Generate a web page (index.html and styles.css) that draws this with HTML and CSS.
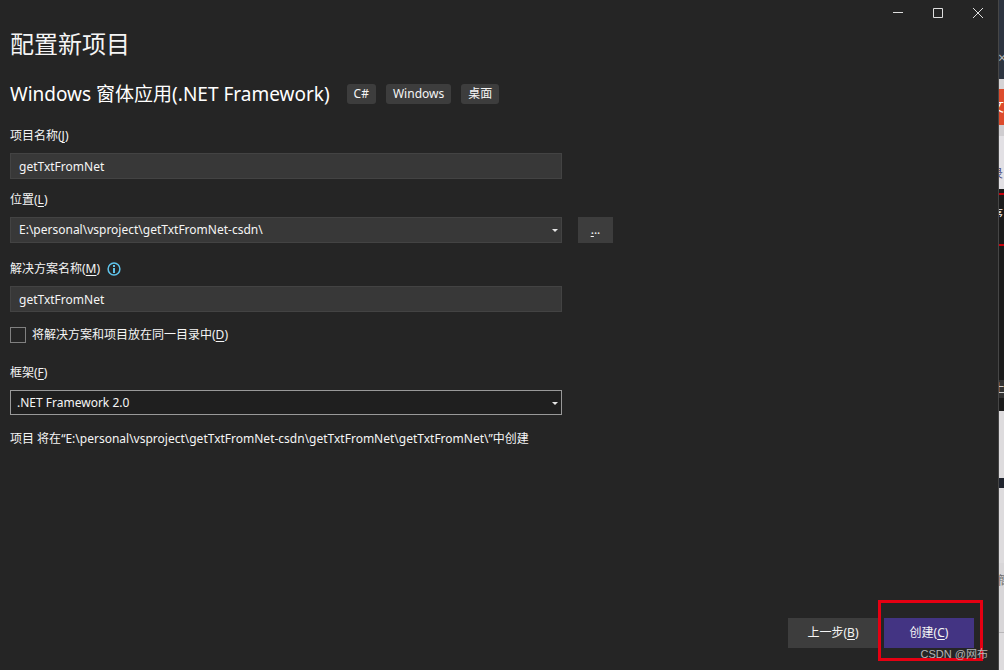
FILE: index.html
```html
<!DOCTYPE html>
<html lang="zh-CN">
<head>
<meta charset="utf-8">
<title>配置新项目</title>
<meta name="viewport" content="width=device-width, initial-scale=1">
<link rel="stylesheet" href="styles.css">
</head>
<body>
<div class="screen">
  <main class="dialog">
    <header class="titlebar">
      <button class="winbtn" type="button" aria-label="最小化"><svg width="10" height="10" viewBox="0 0 10 10"><path d="M0 4.5h10"/></svg></button>
      <button class="winbtn" type="button" aria-label="最大化"><svg width="10" height="10" viewBox="0 0 10 10"><path d="M.5.5h9v9h-9z"/></svg></button>
      <button class="winbtn" type="button" aria-label="关闭"><svg width="10" height="10" viewBox="0 0 10 10"><path d="M0 0l10 10M10 0L0 10"/></svg></button>
    </header>
    <form class="form">
      <h1 class="title">配置新项目</h1>
      <div class="template">
        <h2 class="template-name">Windows 窗体应用(.NET Framework)</h2>
        <ul class="tags">
          <li class="tag">C#</li>
          <li class="tag">Windows</li>
          <li class="tag">桌面</li>
        </ul>
      </div>

      <div class="field field-name">
        <label class="label" for="name">项目名称(<u>J</u>)</label>
        <input class="box" id="name" type="text" value="getTxtFromNet">
      </div>

      <div class="field field-location">
        <label class="label" for="location">位置(<u>L</u>)</label>
        <div class="row">
          <div class="combo">
            <select class="box" id="location"><option>E:\personal\vsproject\getTxtFromNet-csdn\</option></select>
            <svg class="arrow" width="6" height="3" viewBox="0 0 6 3"><path d="M0 0h6L3 3z"/></svg>
          </div>
          <button class="browse" type="button" aria-label="浏览"><u>.</u>..</button>
        </div>
      </div>

      <div class="field field-solution">
        <div class="label-row">
          <label class="label" for="solution">解决方案名称(<u>M</u>)</label>
          <svg class="info" width="14" height="14" viewBox="0 0 14 14"><circle cx="7" cy="7" r="5.9"/><path d="M7 3v2M7 6v5"/></svg>
        </div>
        <input class="box" id="solution" type="text" value="getTxtFromNet">
      </div>

      <div class="check">
        <input class="tick" id="same" type="checkbox">
        <label class="label" for="same">将解决方案和项目放在同一目录中(<u>D</u>)</label>
      </div>

      <div class="field field-framework">
        <label class="label" for="framework">框架(<u>F</u>)</label>
        <div class="combo">
          <select class="box box-active" id="framework"><option>.NET Framework 2.0</option></select>
          <svg class="arrow" width="6" height="3" viewBox="0 0 6 3"><path d="M0 0h6L3 3z"/></svg>
        </div>
      </div>
      <p class="summary">项目 将在<span class="quote">“</span>E:\personal\vsproject\getTxtFromNet-csdn\getTxtFromNet\getTxtFromNet\<span class="quote">”</span>中创建</p>
    </form>
    <footer class="footer">
      <button class="action" type="button">上一步(<u>B</u>)</button>
      <button class="action action-primary" type="button">创建(<u>C</u>)</button>
      <span class="marker"></span>
      <span class="watermark">CSDN @网布</span>
    </footer>
  </main>
  <aside class="behind" aria-hidden="true">
    <div class="part part-nav">×</div>
    <div class="part part-pale"></div>
    <div class="part part-orange">文</div>
    <div class="part part-gray"></div>
    <div class="part part-page">录</div>
    <div class="part part-code">序</div>
    <div class="part part-dark"></div>
    <div class="part part-status">上</div>
    <div class="part part-black"></div>
    <div class="part part-light"></div>
    <div class="part part-navy"></div>
    <div class="part part-lower"></div>
    <div class="part part-text">簡</div>
    <div class="part part-rest"></div>
  </aside>
</div>
</body>
</html>
```
FILE: styles.css
```css
* { box-sizing: border-box; }
body {
  margin: 0;
  background: #252526;
  color: #f5f5f5;
  font: 12px/18px "Noto Sans", "Noto Sans CJK SC", sans-serif;
}
button, input, select { font: inherit; color: inherit; border-radius: 0; }
u { text-underline-offset: 2px; }

.screen { display: flex; min-height: 100vh; }
.dialog {
  flex: 1;
  min-width: 0;
  display: flex;
  flex-direction: column;
  background: #252525;
  border-right: 1px solid #464646;
}

.titlebar { display: flex; justify-content: flex-end; height: 26px; }
.winbtn {
  display: flex;
  align-items: center;
  justify-content: center;
  width: 40px;
  padding: 0;
  border: 0;
  background: none;
}
.winbtn svg { fill: none; stroke: #dedede; stroke-width: 1; }

.form { flex: 1; padding: 0 10px; }
.title { margin: 0; font-size: 24px; line-height: 36px; font-weight: 400; }
.template { display: flex; align-items: center; gap: 17px; margin-top: 18px; }
.template-name { margin: 0; font-size: 19px; line-height: 28px; font-weight: 400; color: #fff; }
.tags { display: flex; gap: 10px; margin: 0; padding: 0; list-style: none; }
.tag { padding: 1px 7px; background: #3d3d3d; border-radius: 3px; }

.field { display: flex; flex-direction: column; align-items: flex-start; gap: 8px; }
.field-name { margin-top: 19px; }
.field-location { margin-top: 12px; }
.field-solution { margin-top: 17px; }
.field-framework { margin-top: 20px; }
.row { display: flex; gap: 16px; width: 100%; }
.label-row { display: flex; align-items: center; gap: 7px; }
.info { fill: none; stroke: #5fc3ea; stroke-width: 2; }
.info circle { stroke-width: 1.5; }

.box {
  width: 100%;
  max-width: 552px;
  height: 26px;
  padding: 0 8px;
  background: #383838;
  border: 1px solid #434343;
  outline: 0;
  appearance: none;
}
.box-active { height: 25px; padding: 0 6px; background: #1f1f1f; border-color: #999; }
.combo { position: relative; display: flex; width: 100%; max-width: 552px; }
.arrow { position: absolute; right: 4px; top: 12px; fill: #e6e6e6; pointer-events: none; }
.browse { width: 35px; height: 26px; padding: 0; border: 0; background: #3d3d3d; }

.check { display: flex; align-items: center; gap: 6px; margin-top: 14px; }
.tick { appearance: none; width: 16px; height: 16px; margin: 0; border: 1px solid #808080; background: #252525; }
.tick:checked { background: #999; }
.summary { margin: 15px 0 0; }
.quote { font-family: "Noto Sans", sans-serif; }

.footer {
  position: relative;
  display: flex;
  justify-content: flex-end;
  gap: 6px;
  padding: 0 24px 22px 10px;
}
.action { width: 90px; height: 30px; padding: 0; border: 0; background: #3d3d3d; }
.action-primary { background: #433483; }
.marker {
  position: absolute;
  right: 15px;
  bottom: 9px;
  width: 105px;
  height: 61px;
  border: 3px solid #e60012;
  pointer-events: none;
}
.watermark {
  position: absolute;
  right: 10px;
  bottom: 7px;
  font: 11px/18px "Liberation Sans", "Noto Sans CJK SC", sans-serif;
  color: #b5b5b5;
  white-space: nowrap;
}

.behind { display: flex; flex-direction: column; width: 5px; overflow: hidden; background: #1b1b1b; }
.part { flex: none; overflow: hidden; text-indent: -1px; white-space: nowrap; }
.part-nav { height: 79px; padding-top: 49px; background: #2d3440; color: #b5b5b5; font-size: 14px; }
.part-pale { height: 10px; background: #d5d3d5; }
.part-orange { height: 36px; padding-top: 8px; background: #dd4b2c; color: #fff; text-indent: -9px; font-size: 14px; }
.part-gray { height: 11px; background: #cfcdd0; }
.part-page { height: 53px; padding-top: 29px; background: #e2e0e4; color: #4a4a80; text-indent: -8px; }
.part-code { height: 53px; margin-top: 4px; padding-top: 11px; border-top: 2px solid #c8000c; border-bottom: 2px solid #c8000c; text-indent: -8px; }
.part-dark { height: 134px; }
.part-status { height: 18px; background: #333; color: #ccc; text-indent: -6px; }
.part-black { height: 13px; }
.part-light { height: 67px; background: #dddbdd; }
.part-navy { height: 10px; background: #20242e; }
.part-lower { height: 75px; background: #dddbdd; }
.part-text { height: 70px; padding-top: 9px; background: #d8d6d8; border-bottom: 1px solid #b8b6b8; color: #707070; }
.part-rest { flex: 1; background: #dddbdd; }
```
